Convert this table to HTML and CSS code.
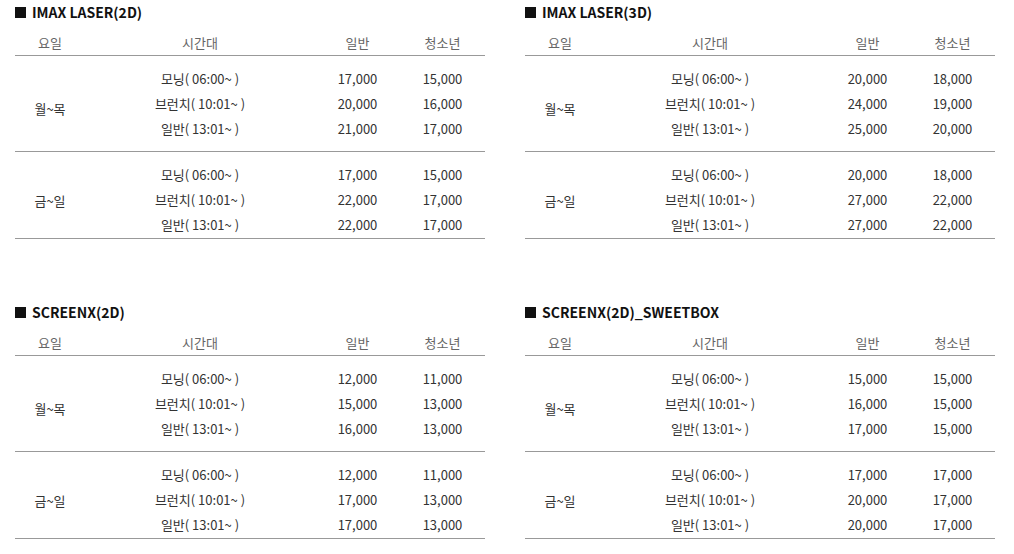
FILE: index.html
```html
<!DOCTYPE html>
<html>
<head>
<meta charset="utf-8">
<title>가격표</title>
<link rel="stylesheet" href="styles.css">
</head>
<body>
<div class="grid">
  <section class="block">
    <h3 class="title"><span class="sq"></span>IMAX LASER(2D)</h3>
    <table class="price">
      <colgroup><col class="c1"><col class="c2"><col class="c3"><col class="c4"></colgroup>
      <thead><tr><th>요일</th><th>시간대</th><th>일반</th><th>청소년</th></tr></thead>
      <tbody class="g1">
        <tr class="first"><td rowspan="3" class="day">월~목</td><td>모닝( 06:00~ )</td><td>17,000</td><td>15,000</td></tr>
        <tr><td>브런치( 10:01~ )</td><td>20,000</td><td>16,000</td></tr>
        <tr class="last"><td>일반( 13:01~ )</td><td>21,000</td><td>17,000</td></tr>
      </tbody>
      <tbody class="g2">
        <tr class="first"><td rowspan="3" class="day">금~일</td><td>모닝( 06:00~ )</td><td>17,000</td><td>15,000</td></tr>
        <tr><td>브런치( 10:01~ )</td><td>22,000</td><td>17,000</td></tr>
        <tr class="last"><td>일반( 13:01~ )</td><td>22,000</td><td>17,000</td></tr>
      </tbody>
    </table>
  </section>
  <section class="block">
    <h3 class="title"><span class="sq"></span>IMAX LASER(3D)</h3>
    <table class="price">
      <colgroup><col class="c1"><col class="c2"><col class="c3"><col class="c4"></colgroup>
      <thead><tr><th>요일</th><th>시간대</th><th>일반</th><th>청소년</th></tr></thead>
      <tbody class="g1">
        <tr class="first"><td rowspan="3" class="day">월~목</td><td>모닝( 06:00~ )</td><td>20,000</td><td>18,000</td></tr>
        <tr><td>브런치( 10:01~ )</td><td>24,000</td><td>19,000</td></tr>
        <tr class="last"><td>일반( 13:01~ )</td><td>25,000</td><td>20,000</td></tr>
      </tbody>
      <tbody class="g2">
        <tr class="first"><td rowspan="3" class="day">금~일</td><td>모닝( 06:00~ )</td><td>20,000</td><td>18,000</td></tr>
        <tr><td>브런치( 10:01~ )</td><td>27,000</td><td>22,000</td></tr>
        <tr class="last"><td>일반( 13:01~ )</td><td>27,000</td><td>22,000</td></tr>
      </tbody>
    </table>
  </section>
  <section class="block">
    <h3 class="title"><span class="sq"></span>SCREENX(2D)</h3>
    <table class="price">
      <colgroup><col class="c1"><col class="c2"><col class="c3"><col class="c4"></colgroup>
      <thead><tr><th>요일</th><th>시간대</th><th>일반</th><th>청소년</th></tr></thead>
      <tbody class="g1">
        <tr class="first"><td rowspan="3" class="day">월~목</td><td>모닝( 06:00~ )</td><td>12,000</td><td>11,000</td></tr>
        <tr><td>브런치( 10:01~ )</td><td>15,000</td><td>13,000</td></tr>
        <tr class="last"><td>일반( 13:01~ )</td><td>16,000</td><td>13,000</td></tr>
      </tbody>
      <tbody class="g2">
        <tr class="first"><td rowspan="3" class="day">금~일</td><td>모닝( 06:00~ )</td><td>12,000</td><td>11,000</td></tr>
        <tr><td>브런치( 10:01~ )</td><td>17,000</td><td>13,000</td></tr>
        <tr class="last"><td>일반( 13:01~ )</td><td>17,000</td><td>13,000</td></tr>
      </tbody>
    </table>
  </section>
  <section class="block">
    <h3 class="title"><span class="sq"></span>SCREENX(2D)_SWEETBOX</h3>
    <table class="price">
      <colgroup><col class="c1"><col class="c2"><col class="c3"><col class="c4"></colgroup>
      <thead><tr><th>요일</th><th>시간대</th><th>일반</th><th>청소년</th></tr></thead>
      <tbody class="g1">
        <tr class="first"><td rowspan="3" class="day">월~목</td><td>모닝( 06:00~ )</td><td>15,000</td><td>15,000</td></tr>
        <tr><td>브런치( 10:01~ )</td><td>16,000</td><td>15,000</td></tr>
        <tr class="last"><td>일반( 13:01~ )</td><td>17,000</td><td>15,000</td></tr>
      </tbody>
      <tbody class="g2">
        <tr class="first"><td rowspan="3" class="day">금~일</td><td>모닝( 06:00~ )</td><td>17,000</td><td>17,000</td></tr>
        <tr><td>브런치( 10:01~ )</td><td>20,000</td><td>17,000</td></tr>
        <tr class="last"><td>일반( 13:01~ )</td><td>20,000</td><td>17,000</td></tr>
      </tbody>
    </table>
  </section>
</div>
</body>
</html>
```

FILE: styles.css
```css
html, body {
  margin: 0;
  padding: 0;
  background: #fff;
}
body {
  font-family: "Noto Sans CJK KR", "Noto Sans", sans-serif;
  color: #333;
}
.grid {
  display: grid;
  grid-template-columns: 470px 470px;
  column-gap: 40px;
  row-gap: 61px;
  padding: 0 0 0 15px;
}
.title {
  margin: 0 0 7px 0;
  font-size: 14px;
  line-height: 24px;
  font-weight: 700;
  color: #111;
  display: flex;
  align-items: center;
}
.sq {
  display: inline-block;
  width: 11px;
  height: 11px;
  background: #111;
  margin-right: 6px;
}
.price {
  width: 470px;
  table-layout: fixed;
  border-collapse: collapse;
  font-size: 13px;
}
.c1 { width: 70px; }
.c2 { width: 230px; }
.c3 { width: 85px; }
.c4 { width: 85px; }
.price th {
  font-weight: 400;
  color: #666;
  line-height: 24px;
  padding: 0;
  text-align: center;
  border-bottom: 1px solid #999;
}
.price td {
  padding: 0;
  line-height: 25px;
  text-align: center;
  color: #333;
}
.price tbody {
  border-bottom: 1px solid #999;
}
.price tr.first td {
  padding-top: 10px;
}
.g1 tr.last td {
  padding-bottom: 10px;
}
.g2 tr.last td {
  padding-bottom: 1px;
}
.price td.day {
  padding: 0;
  vertical-align: middle;
}
```
